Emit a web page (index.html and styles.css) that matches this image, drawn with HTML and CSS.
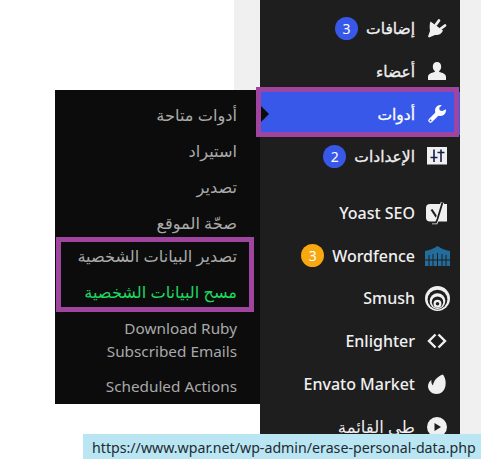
FILE: index.html
```html
<!DOCTYPE html>
<html lang="ar" dir="rtl">
<head>
    <meta charset="UTF-8">
    <meta name="viewport" content="width=device-width, initial-scale=1.0">
    <title>أدوات</title>
    <link rel="stylesheet" href="styles.css">
</head>
<body>
    <div class="page">
        <div class="gutter"></div>

        <nav class="sidebar">
            <a class="menu-item">
                <svg class="menu-icon" viewBox="0 0 20 20"><path fill="#f0f0f1" d="M3.500 3.500L16 12.500c-1.500 3.500-4.500 5-8 4.500L2 19.500 1 18.500 3 13C2.500 9 2.500 6 3.500 3.500z"/><path fill="none" stroke="#f0f0f1" stroke-width="2.800" stroke-linecap="round" d="M12 2.500L9 6.500M18 7.500L14 10.500"/></svg>
                <span class="menu-label is-arabic">إضافات</span>
                <span class="count">3</span>
            </a>
            <a class="menu-item">
                <svg class="menu-icon" viewBox="0 0 20 20"><path fill="#f0f0f1" d="M10 1c2.600 0 4.200 2.100 4.200 4.700 0 1.800-.8 3.400-2 4.300v1c3.400.6 6.800 2.200 6.800 4.700V19H1v-3.300c0-2.500 3.400-4.100 6.800-4.700v-1c-1.200-.9-2-2.500-2-4.300C5.800 3.100 7.400 1 10 1z"/></svg>
                <span class="menu-label is-arabic">أعضاء</span>
            </a>
            <a class="menu-item is-current">
                <svg class="menu-icon" viewBox="0 0 20 20"><path fill="none" stroke="#fff" stroke-width="4.500" stroke-linecap="round" d="M3.500 16.500L10 10"/><path fill="#fff" d="M18.800 5.200a5.500 5.500 0 11-4-4l-2.600 2.600.6 2.600 2.600.6z"/><circle cx="3.500" cy="16.500" r="1" fill="#3858e9"/></svg>
                <span class="menu-label is-arabic">أدوات</span>
            </a>
            <a class="menu-item">
                <svg class="menu-icon" viewBox="0 0 20 20"><rect x="0" y="1" width="20" height="17.500" fill="#f0f0f1"/><path stroke="#14204a" stroke-width="1.600" fill="none" d="M7 3.500v12.500M14 3.500v12.500M3.500 11.500h7M10.500 6.500h7"/></svg>
                <span class="menu-label is-arabic">الإعدادات</span>
                <span class="count">2</span>
            </a>

            <a class="menu-item has-gap">
                <svg class="menu-icon yoast" viewBox="0 0 21 23"><path fill="#f0f0f1" d="M4 2h17v17.500H4a4 4 0 01-4-4V6a4 4 0 014-4z"/><path fill="none" stroke="#1e1e1e" stroke-width="2.200" d="M5.500 7.500L10.500 15"/><path fill="none" stroke="#f0f0f1" stroke-width="3.600" d="M16.500 .5L11.500 17 10 20.500H6"/><path fill="none" stroke="#1e1e1e" stroke-width="1.800" d="M16.500 .5L11.500 17 10 20.500H6"/></svg>
                <span class="menu-label">Yoast SEO</span>
            </a>
            <a class="menu-item">
                <svg class="menu-icon gate" viewBox="0 0 25 20"><path fill="#226d9c" d="M0 5Q7 4 12.500 0 18 4 25 5v15H0z"/><path stroke="#1e1e1e" stroke-width="1" fill="none" d="M4 9v11M8 8v12M12.500 7v13M17 8v12M21 9v11M0 14h25"/></svg>
                <span class="menu-label">Wordfence</span>
                <span class="count is-warning">3</span>
            </a>
            <a class="menu-item">
                <svg class="menu-icon gate smush" viewBox="0 0 24 24"><circle cx="12" cy="12" r="12" fill="#f0f0f1"/><circle cx="12" cy="13" r="9.500" fill="#1e1e1e"/><circle cx="12" cy="14.500" r="7.500" fill="#f0f0f1"/><circle cx="12" cy="15.500" r="5.500" fill="#1e1e1e"/><circle cx="12" cy="17" r="3.800" fill="#f0f0f1"/><circle cx="12" cy="17" r="1.700" fill="#1e1e1e"/></svg>
                <span class="menu-label">Smush</span>
            </a>
            <a class="menu-item">
                <svg class="menu-icon" viewBox="0 0 20 20"><path fill="none" stroke="#f0f0f1" stroke-width="2.400" d="M8.500 3.500L2 10l6.500 6.500M11.500 3.500L18 10l-6.500 6.500"/></svg>
                <span class="menu-label">Enlighter</span>
            </a>
            <a class="menu-item">
                <svg class="menu-icon" viewBox="0 0 20 20"><path fill="#f0f0f1" d="M16 .5C18.500 4 19 8 18.500 11.500 17.800 16.500 14 20 9.500 20 5 20 1 16.500 1 12 1 9.500 2.500 7 4.500 6 4 8 4.500 10 6 11.500 6.500 7 10 2.500 16 .5z"/></svg>
                <span class="menu-label">Envato Market</span>
            </a>
            <a class="menu-item">
                <svg class="menu-icon" viewBox="0 0 20 20"><path fill="#f0f0f1" fill-rule="evenodd" d="M10 0a10 10 0 110 20 10 10 0 010-20zM7.500 6v8l6.500-4z"/></svg>
                <span class="menu-label is-arabic is-muted">طي القائمة</span>
            </a>
        </nav>

        <div class="workspace">
            <div class="workspace-strip"></div>
        </div>
    </div>

    <ul class="flyout">
        <li class="is-arabic">أدوات متاحة</li>
        <li class="is-arabic">استيراد</li>
        <li class="is-arabic">تصدير</li>
        <li class="is-arabic">صحّة الموقع</li>
        <li class="is-arabic is-pulled">تصدير البيانات الشخصية</li>
        <li class="is-arabic is-active">مسح البيانات الشخصية</li>
        <li>Download Ruby Subscribed Emails</li>
        <li>Scheduled Actions</li>
    </ul>
    <span class="flyout-arrow"></span>

    <div class="mark mark-tools"></div>
    <div class="mark mark-privacy"></div>

    <div class="status-bar" dir="ltr">https://www.wpar.net/wp-admin/erase-personal-data.php</div>
</body>
</html>
```

FILE: styles.css
```css
* {
    margin: 0;
    padding: 0;
    box-sizing: border-box;
}

html, body {
    width: 484px;
    height: 459px;
    overflow: hidden;
    background: #fff;
}

body {
    position: relative;
    font-family: "Noto Sans", "DejaVu Sans", sans-serif;
}

.page {
    display: flex;
    height: 459px;
}

.gutter {
    width: 3px;
    background: #fff;
}

.gutter + .sidebar {
    margin-right: 21px;
}

.sidebar {
    width: 200px;
    height: 459px;
    padding-top: 7px;
    background: #1e1e1e;
    position: relative;
    box-shadow: 21px 0 0 #f0f0f1;
}

.menu-item {
    display: flex;
    align-items: center;
    height: 42.700px;
    padding-right: 13px;
    color: #f0f0f1;
    font-size: 16px;
    font-weight: 500;
}

.menu-item.has-gap {
    margin-top: 14px;
}

.menu-item .is-arabic {
    font-size: 15.500px;
    font-weight: 400;
    -webkit-text-stroke: 0.3px;
}

.menu-item .is-muted {
    font-size: 16.500px;
    -webkit-text-stroke: 0;
}

.is-current {
    background: #3858e9;
    color: #fff;
}

.menu-icon {
    width: 20px;
    height: 20px;
    margin-left: 12px;
    flex-shrink: 0;
}

.menu-icon.gate {
    width: 25px;
    height: 20px;
    margin-right: -3px;
    margin-left: 10px;
}

.menu-icon.smush {
    height: 25px;
}

.menu-icon.yoast {
    width: 21px;
    height: 23px;
    margin-left: 11px;
}

.count {
    width: 23px;
    height: 23px;
    margin-right: 8px;
    border-radius: 50%;
    background: #3858e9;
    color: #fff;
    font-size: 14px;
    font-weight: 400;
    line-height: 23px;
    text-align: center;
}

.count.is-warning {
    background: #f9a80f;
}

.workspace {
    flex: 1;
    display: flex;
    justify-content: flex-start;
}

.workspace-strip {
    width: 26px;
    height: 90px;
    background: #f0f0f1;
}

.flyout {
    position: absolute;
    top: 90px;
    left: 55px;
    width: 205px;
    height: 314px;
    padding: 8px 23px 0 20px;
    background: #0c0c0c;
    list-style: none;
    color: #a9a9aa;
    font-size: 15.300px;
}

.flyout li {
    min-height: 36px;
    padding: 6px 0;
    line-height: 23px;
}

.flyout .is-arabic {
    font-size: 16.200px;
}

.flyout .is-pulled {
    margin-top: -3px;
}

.flyout .is-active {
    color: #1ed760;
}

.flyout-arrow {
    position: absolute;
    top: 106px;
    left: 261px;
    border-style: solid;
    border-width: 8px 0 8px 8px;
    border-color: transparent transparent transparent #0c0c0c;
}

.mark {
    position: absolute;
    border: 5px solid #a0459f;
}

.mark-tools {
    top: 87px;
    left: 256px;
    width: 203px;
    height: 50px;
}

.mark-privacy {
    top: 237px;
    left: 56px;
    width: 198px;
    height: 75px;
}

.status-bar {
    position: absolute;
    top: 434px;
    left: 83px;
    width: 398px;
    height: 25px;
    padding-left: 9px;
    background: #b9e6f2;
    color: #1f2a33;
    font-size: 14.200px;
    line-height: 28px;
    white-space: nowrap;
}
```
